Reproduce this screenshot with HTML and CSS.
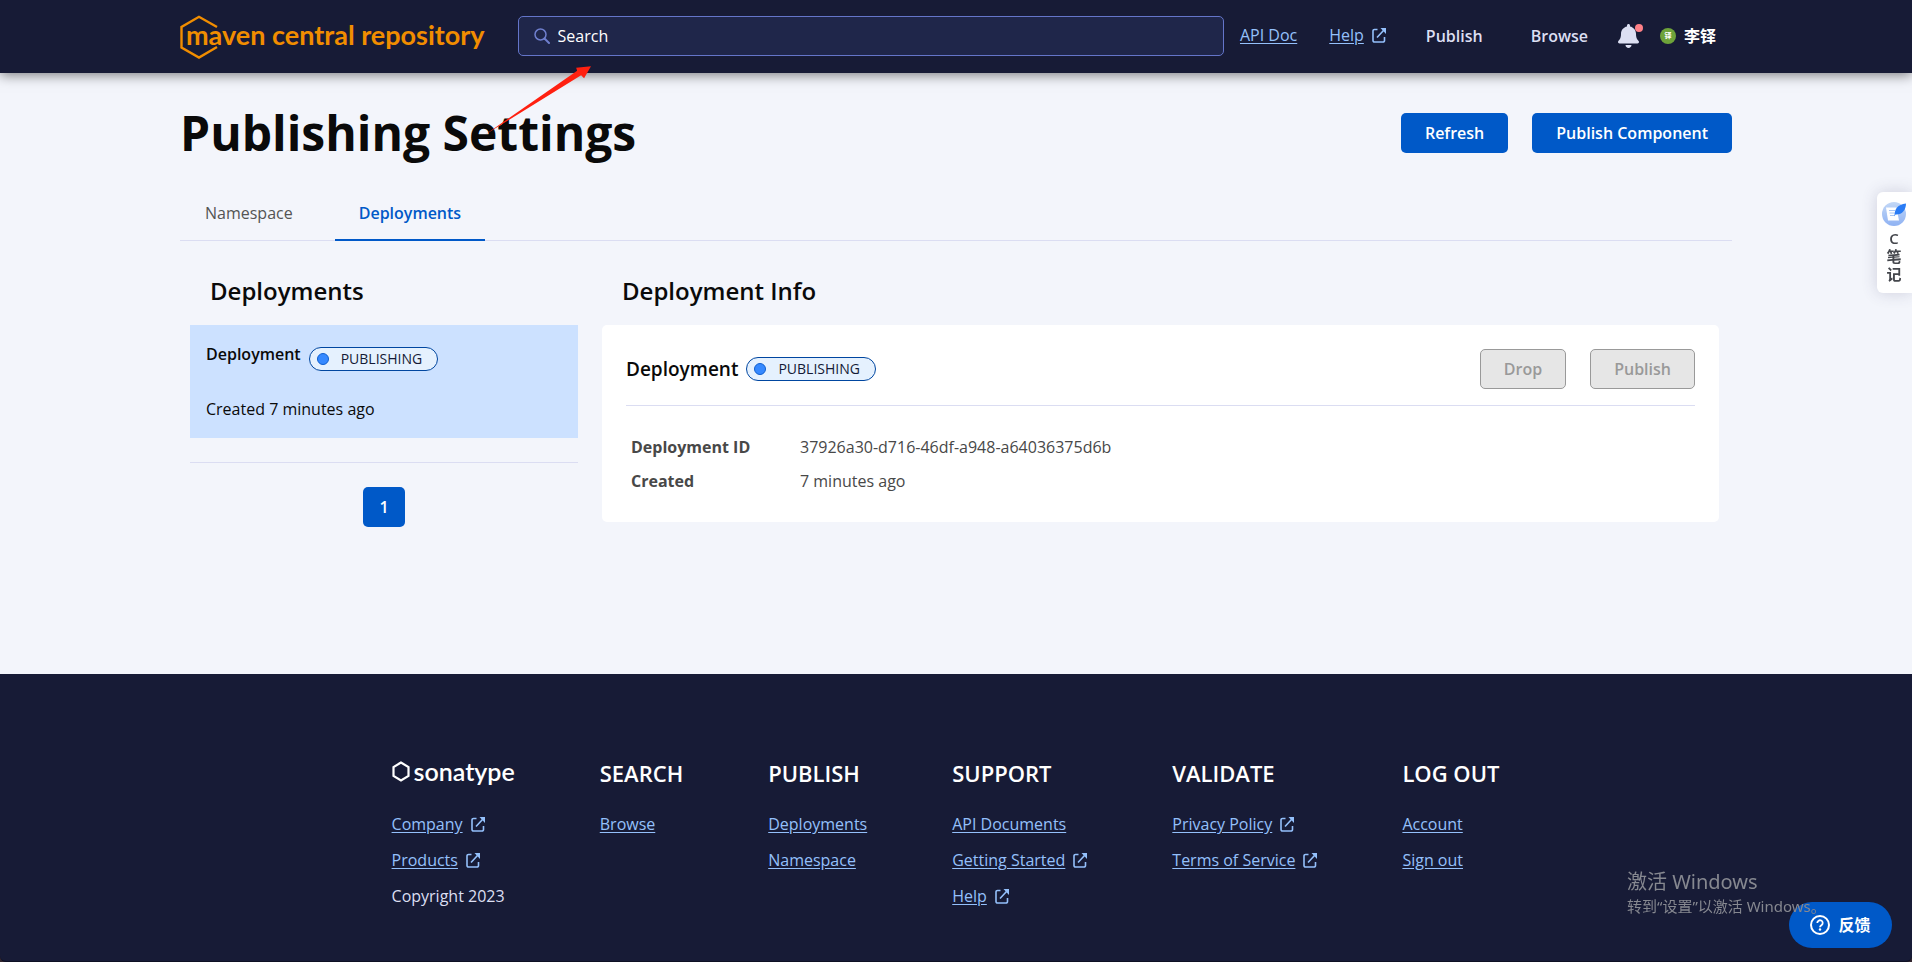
FILE: index.html
```html
<!DOCTYPE html>
<html lang="en">
<head>
<meta charset="utf-8">
<title>Publishing Settings - Maven Central Repository</title>
<meta name="viewport" content="width=device-width, initial-scale=1">
<link rel="stylesheet" href="styles.css">
</head>
<body>
<svg class="sprite" aria-hidden="true">
  <symbol id="external" viewBox="0 0 14 15">
    <path d="M5.5 1.5H2.5A1.5 1.5 0 0 0 1 3v9.500A1.500 1.500 0 0 0 2.500 14h8.500a1.500 1.500 0 0 0 1.500-1.500V9M5 9.500l6.500-7" fill="none" stroke="currentColor" stroke-width="1.600"/>
    <path d="M8.500 0H14v6z" fill="currentColor"/>
  </symbol>
</svg>
<header class="topbar">
  <div class="container topbar-inner">
    <a class="brand" href="#" aria-label="maven central repository">
      <svg class="brand-hex" viewBox="0 0 38 44" aria-hidden="true"><path d="M37 12 19 1.800 1.500 12v20.500L19 42.500 37 32" fill="none" stroke="#f18d00" stroke-width="2.400"/></svg>
      <span class="brand-name">maven central repository</span>
    </a>
    <label class="search">
      <svg class="search-icon" viewBox="0 0 16 16" aria-hidden="true"><circle cx="6.500" cy="6.500" r="5.500" fill="none" stroke="currentColor" stroke-width="1.500"/><path d="m10.500 10.500 4.500 4.500" stroke="currentColor" stroke-width="2" stroke-linecap="round"/></svg>
      <input class="search-input" type="text" placeholder="Search" aria-label="Search">
    </label>
    <nav class="nav">
      <a class="link" href="#">API Doc</a>
      <a class="link nav-help" href="#"><span>Help</span><svg class="ext" aria-hidden="true"><use href="#external"/></svg></a>
      <a class="nav-item" href="#">Publish</a>
      <a class="nav-item" href="#">Browse</a>
      <button class="bell" type="button" aria-label="Notifications">
        <svg class="bell-icon" viewBox="0 0 448 512" aria-hidden="true"><path fill="currentColor" d="M224 512c35.320 0 63.970-28.650 63.970-64H160.030c0 35.350 28.650 64 63.970 64zm215.390-149.710c-19.320-20.760-55.470-51.990-55.470-154.290 0-77.700-54.480-139.900-127.940-155.160V32c0-17.670-14.320-32-31.980-32s-31.980 14.330-31.980 32v20.840C118.560 68.100 64.080 130.300 64.080 208c0 102.300-36.150 133.530-55.470 154.290-6 6.450-8.660 14.160-8.610 21.710.110 16.400 12.980 32 32.100 32h383.800c19.120 0 32-15.600 32.100-32 .050-7.550-2.610-15.270-8.610-21.710z"/></svg>
        <span class="bell-dot"></span>
      </button>
      <button class="user" type="button"><span class="avatar">铎</span><span>李铎</span></button>
    </nav>
  </div>
</header>
<main class="main">
  <div class="container">
    <div class="title-row">
      <h1 class="title">Publishing Settings</h1>
      <div class="actions">
        <button class="btn" type="button">Refresh</button>
        <button class="btn" type="button">Publish Component</button>
      </div>
    </div>
    <div class="tabs" role="tablist">
      <button class="tab" type="button" role="tab" aria-selected="false">Namespace</button>
      <button class="tab tab-active" type="button" role="tab" aria-selected="true">Deployments</button>
    </div>
    <div class="columns">
      <section class="list">
        <h2 class="section-title">Deployments</h2>
        <article class="item">
          <div class="item-head"><h3 class="item-title">Deployment</h3><span class="pill"><i class="pill-dot"></i>PUBLISHING</span></div>
          <p class="item-text">Created 7 minutes ago</p>
        </article>
        <div class="pager"><button class="page" type="button">1</button></div>
      </section>
      <section class="info">
        <h2 class="section-title">Deployment Info</h2>
        <article class="card">
          <div class="card-head">
            <h3 class="card-title">Deployment</h3><span class="pill"><i class="pill-dot"></i>PUBLISHING</span>
            <div class="actions card-actions">
              <button class="btn" type="button" disabled>Drop</button>
              <button class="btn" type="button" disabled>Publish</button>
            </div>
          </div>
          <dl class="facts">
            <dt>Deployment ID</dt><dd>37926a30-d716-46df-a948-a64036375d6b</dd>
            <dt>Created</dt><dd>7 minutes ago</dd>
          </dl>
        </article>
      </section>
    </div>
  </div>
</main>
<footer class="footer">
  <div class="footer-inner">
    <div class="foot-col">
      <div class="foot-head foot-brand"><svg class="foot-hex" viewBox="0 0 18 21" aria-hidden="true"><path d="M9 1.500 1.500 6v9L9 19.500l7.500-4.500V6z" fill="none" stroke="#fff" stroke-width="2.200"/></svg><span>sonatype</span></div>
      <a class="link" href="#"><span>Company</span><svg class="ext" aria-hidden="true"><use href="#external"/></svg></a>
      <a class="link" href="#"><span>Products</span><svg class="ext" aria-hidden="true"><use href="#external"/></svg></a>
      <span class="foot-text">Copyright 2023</span>
    </div>
    <div class="foot-col">
      <h2 class="foot-head">SEARCH</h2>
      <a class="link" href="#">Browse</a>
    </div>
    <div class="foot-col">
      <h2 class="foot-head">PUBLISH</h2>
      <a class="link" href="#">Deployments</a>
      <a class="link" href="#">Namespace</a>
    </div>
    <div class="foot-col">
      <h2 class="foot-head">SUPPORT</h2>
      <a class="link" href="#">API Documents</a>
      <a class="link" href="#"><span>Getting Started</span><svg class="ext" aria-hidden="true"><use href="#external"/></svg></a>
      <a class="link" href="#"><span>Help</span><svg class="ext" aria-hidden="true"><use href="#external"/></svg></a>
    </div>
    <div class="foot-col">
      <h2 class="foot-head">VALIDATE</h2>
      <a class="link" href="#"><span>Privacy Policy</span><svg class="ext" aria-hidden="true"><use href="#external"/></svg></a>
      <a class="link" href="#"><span>Terms of Service</span><svg class="ext" aria-hidden="true"><use href="#external"/></svg></a>
    </div>
    <div class="foot-col">
      <h2 class="foot-head">LOG OUT</h2>
      <a class="link" href="#">Account</a>
      <a class="link" href="#">Sign out</a>
    </div>
  </div>
</footer>

<svg class="arrow" viewBox="0 0 108 70" aria-hidden="true"><path d="M0 69 93 4.500 92 1.500 107 0l-7 12-3-3L0 69z" fill="#ff2010"/></svg>

<aside class="notes">
  <svg class="notes-icon" viewBox="0 0 24 24" aria-hidden="true">
    <defs><linearGradient id="disc" x1="0" y1="0" x2="0" y2="1"><stop offset="0" stop-color="#c3d8f6"/><stop offset="1" stop-color="#8fb2f3"/></linearGradient></defs>
    <circle cx="12" cy="12" r="12" fill="url(#disc)"/>
    <path d="M4 5.500h10.500L17 18.500H6z" fill="#fff"/>
    <path d="M7 8.500h6M7.500 11h5M8 13.500h5" stroke="#a9c6f5"/>
    <path d="M12.500 14c0-7 3-11.500 11.500-12.500C24 8 20 13 13.500 12.500L12 15z" fill="#2a7cf5"/>
  </svg>
  <span>C</span><span>笔</span><span>记</span>
</aside>

<button class="feedback" type="button">
  <svg class="feedback-icon" viewBox="0 0 20 20" aria-hidden="true"><circle cx="10" cy="10" r="9" fill="none" stroke="#fff" stroke-width="2"/><path d="M7.300 8a2.700 2.700 0 1 1 4.200 2.200c-1 .700-1.500 1-1.500 2" fill="none" stroke="#fff" stroke-width="1.800"/><circle cx="10" cy="14.500" r="1.200" fill="#fff"/></svg>
  <span>反馈</span>
</button>
<div class="watermark"><div class="watermark-title">激活 Windows</div><div>转到“设置”以激活 Windows。</div></div>
</body>
</html>
```
FILE: styles.css
```css
* { box-sizing: border-box; }
html { background: #33272f; }
body {
  margin: 0;
  min-height: 100vh;
  display: flex;
  flex-direction: column;
  position: relative;
  color: #0a0a0a;
  font: 16px/24px "Open Sans", "Noto Sans CJK SC", sans-serif;
}
h1, h2, h3, p, dl, dd { margin: 0; }
button, input { font: inherit; color: inherit; }
button { border: 0; background: none; padding: 0; }
.sprite { display: none; }
.container { max-width: 1600px; margin: 0 auto; padding: 0 24px; width: 100%; }

.topbar { position: relative; z-index: 1; background: #171b36; height: 73px; box-shadow: 0 2px 12px rgba(0, 0, 0, 0.5); color: #dcdff2; }
.topbar-inner { display: flex; align-items: center; height: 72px; }
.brand { position: relative; display: flex; align-items: center; color: #f18d00; text-decoration: none; padding-left: 6px; margin: 2px 33px 0 0; height: 44px; }
.brand-hex { position: absolute; left: 0; top: 0; width: 38px; height: 44px; }
.brand-name { font: 700 27px/36px Lato, sans-serif; white-space: nowrap; padding-bottom: 4px; }
.search { flex: 1; height: 40px; display: flex; align-items: center; gap: 8px; padding: 0 15px; background: #1f264a; border: 1px solid #6475c9; border-radius: 5px; }
.search-icon { width: 16px; height: 16px; color: #6f7fce; }
.search-input { flex: 1; min-width: 0; border: 0; padding: 0; background: none; outline: 0; color: #fff; }
.search-input::placeholder { color: #fff; opacity: 1; }
.nav { display: flex; align-items: center; padding: 0 16px; }
.link { display: flex; align-items: center; gap: 8px; color: #94c0fb; text-underline-offset: 2px; }
.nav .link { margin-bottom: 2px; }
.nav .nav-help { margin: 0 40px 2px 32px; }
.ext { width: 14px; height: 15px; }
.nav-item { color: #dcdff2; font-weight: 600; text-decoration: none; margin-right: 48px; }
.nav-item + .nav-item { margin-right: 30px; }
.bell { position: relative; width: 21px; height: 24px; color: #dcdff2; }
.bell-icon { display: block; width: 21px; height: 24px; }
.bell-dot { position: absolute; right: -4px; top: 0; width: 8px; height: 8px; border-radius: 50%; background: #ff8087; }
.user { display: flex; align-items: center; gap: 8px; margin-left: 21px; color: #fff; font-weight: 700; }
.avatar { width: 16px; height: 16px; border-radius: 50%; background: #6ea33a; font-size: 7px; line-height: 16px; text-align: center; }

.main { flex: 1; background: #f3f5fb; }
.title-row { display: flex; justify-content: space-between; align-items: center; padding-top: 28px; }
.title { font-size: 48px; line-height: 64px; font-weight: 700; }
.actions { display: flex; gap: 24px; }
.btn { height: 40px; padding: 0 24px; border-radius: 5px; background: #0059c8; color: #fff; font-weight: 600; }
.btn:disabled { background: #e6e6e6; border: 1px solid #999; color: #999; padding: 0 23px; }
.tabs { display: flex; gap: 18px; margin-top: 25px; padding-left: 1px; border-bottom: 1px solid #dbddf2; }
.tab { padding: 11px 24px 14px; color: #545454; height: 51px; margin-bottom: -1px; border-bottom: 2px solid transparent; }
.tab-active { color: #0059c8; font-weight: 600; border-bottom-color: #0059c8; }
.columns { display: grid; grid-template-columns: 388px 1fr; gap: 24px; padding: 32px 13px 0 10px; }
.section-title { font-size: 24px; line-height: 36px; font-weight: 600; margin: 0 20px 16px; }
.item { background: #cce1ff; padding: 17px 16px 16px; height: 113px; display: flex; flex-direction: column; gap: 26px; }
.item-head { display: flex; gap: 8px; }
.item-title { font-size: 16px; line-height: 24px; font-weight: 600; }
.item-head .pill { margin-top: 5px; }
.pill { display: flex; align-items: center; gap: 12px; height: 24px; padding: 0 15px 0 7px; border: 1px solid #0046a0; border-radius: 12px; background: #e5f1fe; color: #141a36; font-size: 14px; line-height: 22px; font-weight: 400; }
.pill-dot { width: 12px; height: 12px; border-radius: 50%; background: #3689ff; border: 1px solid #0f5fcf; }
.pager { margin-top: 24px; padding-top: 24px; border-top: 1px solid #dbddf2; display: flex; justify-content: center; }
.page { width: 42px; height: 40px; border-radius: 5px; background: #0059c8; color: #fff; font-weight: 600; }
.card { background: #fff; border-radius: 5px; padding: 24px; }
.card-head { display: flex; align-items: center; gap: 8px; padding-bottom: 16px; border-bottom: 1px solid #dbddf2; }
.card-title { font-size: 19px; line-height: 30px; font-weight: 600; }
.card-actions { margin-left: auto; }
.facts { display: grid; grid-template-columns: 145px 1fr; gap: 10px 24px; padding: 29px 5px 5px; color: #484848; }
.facts dt { font-weight: 700; }

.footer { background: #171b36; color: #dcdff2; padding: 80px 21px 53px 0; border-bottom: 1px solid #0e1024; border-radius: 0 0 6px 6px; box-shadow: 0 -8px 0 #171b36; margin-top: 8px; padding-top: 72px; }
.footer-inner { display: flex; justify-content: center; gap: 85px; }
.foot-col { display: flex; flex-direction: column; align-items: flex-start; gap: 12px; }
.foot-head { font-size: 22px; line-height: 38px; font-weight: 600; color: #fff; margin-bottom: 8px; }
.foot-brand { display: flex; align-items: center; gap: 4px; height: 38px; padding-bottom: 4px; font-family: Lato, sans-serif; font-size: 25px; }
.foot-hex { width: 18px; height: 21px; }

.arrow { position: absolute; z-index: 2; left: 485px; top: 66px; width: 107px; height: 70px; }
.notes { position: fixed; right: 0; top: 192px; width: 35px; height: 101px; padding: 10px 1px 0 0; background: #fff; border-radius: 6px 0 0 6px; box-shadow: 0 0 16px rgba(60, 60, 100, 0.2); display: flex; flex-direction: column; align-items: center; font-size: 15px; line-height: 18px; font-weight: 600; color: #44464c; }
.notes-icon { width: 24px; height: 24px; margin-bottom: 3px; }
.feedback { position: fixed; right: 20px; bottom: 14px; width: 103px; height: 46px; border-radius: 23px; background: #0059c8; color: #fff; display: flex; align-items: center; justify-content: center; gap: 8px; font-weight: 700; }
.feedback-icon { width: 20px; height: 20px; }
.watermark { position: fixed; right: 90px; bottom: 45px; width: 195px; color: #868890; font-size: 15px; line-height: 22px; white-space: nowrap; font-family: "Noto Sans", "Noto Sans CJK SC", sans-serif; }
.watermark-title { font-size: 20px; line-height: 26px; }
```
